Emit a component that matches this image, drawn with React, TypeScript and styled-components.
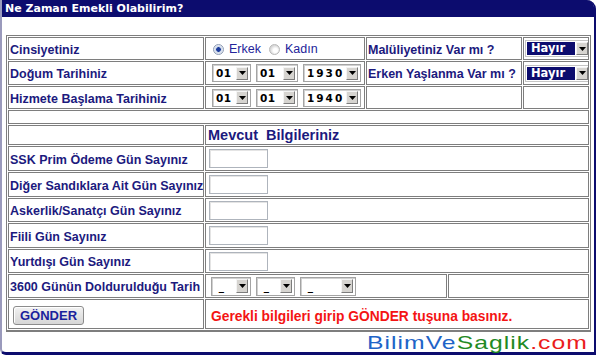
import React from 'react';
import styled, { createGlobalStyle } from 'styled-components';

const GlobalStyle = createGlobalStyle`
  html, body { margin: 0; padding: 0; background: #ffffff; }
  body { font-family: "Liberation Sans", Arial, sans-serif; }
  * { box-sizing: border-box; }
`;

const NAVY = '#0c0c6e';
const LABEL = '#1c1a7e';
const LINE = '#7e7e7e';

const Page = styled.div`
  position: relative;
  width: 598px;
  height: 362px;
  overflow: hidden;
  background: #fff;
`;

const Frame = styled.div`
  width: 596px;
  height: 355px;
  border-left: 2px solid #9a9abc;
  border-right: 2px solid ${NAVY};
  border-bottom: 3px solid ${NAVY};
  border-radius: 0 9px 0 6px;
  display: flex;
  flex-direction: column;
`;

const Header = styled.div`
  height: 17px;
  background: ${NAVY};
  border-top-right-radius: 7px;
  color: #ffffff;
  font-family: "DejaVu Sans", Verdana, sans-serif;
  font-weight: bold;
  font-size: 11px;
  line-height: 17px;
  padding-left: 3px;
  white-space: nowrap;
`;

const Body = styled.div`
  padding: 18px 0 0 4px;
`;

const FormGrid = styled.div`
  display: grid;
  width: max-content;
  grid-template-columns: 196px 160px 81px 74px 66px;
  grid-template-rows: 23px 24px 23px 14px 20px 25px 25px 24px 25px 24px 24px 30px;
  gap: 1px;
  padding: 1px;
  border: 1px solid ${LINE};
  border-bottom-width: 2px;
`;

const Cell = styled.div<{ $col?: string; $pad?: number }>`
  grid-column: ${p => p.$col || 'auto'};
  border: 1px solid ${LINE};
  display: flex;
  align-items: center;
  padding: 0 ${p => (p.$pad ?? 1)}px;
  gap: 5px;
  min-width: 0;
  overflow: hidden;
`;

const Label = styled.span`
  font-weight: bold;
  font-size: 12.5px;
  color: ${LABEL};
  white-space: nowrap;
  padding-top: 2px;
`;

const SectionTitle = styled.span`
  font-weight: bold;
  font-size: 14.5px;
  color: ${LABEL};
  white-space: pre;
  padding-left: 1px;
`;

const RadioGroup = styled.div`
  display: flex;
  align-items: center;
  padding-left: 6px;
  padding-top: 1px;
`;

const Radio = styled.span<{ $checked?: boolean }>`
  display: inline-block;
  width: 11px;
  height: 11px;
  border-radius: 50%;
  border: 1px solid ${p => (p.$checked ? '#8e9cb4' : '#b8b8b8')};
  background: ${p =>
    p.$checked
      ? 'radial-gradient(circle, #1c3c9c 0 2px, #c8d4e8 2.6px, #f0f2f6 5px)'
      : 'radial-gradient(circle at 60% 60%, #ffffff 0 2px, #d8d8d8 5px)'};
  margin-right: 5px;
`;

const RadioText = styled.span`
  font-size: 12.5px;
  color: #24249a;
  margin-right: 8px;
`;

const SelectRow = styled.div<{ $gap?: number; $left?: number }>`
  display: flex;
  align-items: center;
  gap: ${p => p.$gap ?? 4}px;
  padding-left: ${p => p.$left ?? 5}px;
`;

const SelectBox = styled.div<{ $w: number; $h?: number }>`
  width: ${p => p.$w}px;
  height: ${p => p.$h ?? 18}px;
  display: flex;
  align-items: center;
  justify-content: space-between;
  background: #fff;
  border: 1px solid #a4a4a4;
  box-shadow: inset 1px 1px 0 #d0d0d0;
  padding: 1px 2px 1px 3px;
`;

const SelectValue = styled.span<{ $spacing?: number }>`
  font-family: "DejaVu Sans", Verdana, sans-serif;
  font-weight: bold;
  font-size: 10.5px;
  color: #000;
  letter-spacing: ${p => p.$spacing ?? 0}px;
  white-space: pre;
`;

const ArrowBtn = styled.span<{ $h?: number }>`
  width: 12px;
  height: ${p => p.$h ?? 13}px;
  display: flex;
  align-items: center;
  justify-content: center;
  background: #d6d4d0;
  border: 1px solid;
  border-color: #f4f4f4 #7c7c7c #7c7c7c #f4f4f4;
  flex-shrink: 0;
`;

const Arrow = () => (
  <svg width="7" height="4" viewBox="0 0 7 4">
    <path d="M0 0 H7 L3.5 4 Z" fill="#000" />
  </svg>
);

const HayirBox = styled.div`
  display: flex;
  align-items: center;
  height: 17px;
  padding: 1px;
  background: #fff;
  border: 1px solid #c4c4c4;
`;

const HayirValue = styled.span`
  width: 48px;
  height: 13px;
  background: ${NAVY};
  color: #fff;
  font-family: "DejaVu Sans", Verdana, sans-serif;
  font-weight: bold;
  font-size: 11.5px;
  line-height: 13px;
  padding-left: 4px;
  margin-right: 1px;
`;

const TextInput = styled.input`
  width: 59px;
  height: 19px;
  margin-left: 2px;
  border: 1px solid #aeb4bc;
  box-shadow: inset 1px 1px 0 #e4e4e4;
  background: #fff;
  padding: 0 2px;
  font-size: 12px;
  outline: none;
`;

const SubmitButton = styled.button`
  width: 71px;
  height: 19px;
  margin-left: 3px;
  margin-top: 2px;
  border: 1px solid #8c8c8c;
  border-radius: 3px;
  background: linear-gradient(#f2f2f2, #d6d6d6);
  box-shadow: inset 1px 1px 0 #ffffff;
  color: #1a229c;
  font-family: "Liberation Sans", Arial, sans-serif;
  font-weight: bold;
  font-size: 13px;
  padding: 0;
  line-height: 17px;
`;

const Notice = styled.span`
  color: #f41414;
  font-weight: bold;
  font-size: 13.8px;
  white-space: nowrap;
  padding-left: 4px;
  padding-top: 4px;
`;

const Watermark = styled.div`
  position: absolute;
  left: 367px;
  top: 332px;
  font-family: "Liberation Sans", Arial, sans-serif;
  font-size: 19px;
  line-height: 22px;
  letter-spacing: 0.8px;
  white-space: nowrap;
  transform: scaleX(1.3);
  transform-origin: left center;
`;

const Part = styled.span<{ $color: string }>`
  color: ${p => p.$color};
`;

type SelProps = { value: string; w: number; spacing?: number; h?: number };
const Select = ({ value, w, spacing, h }: SelProps) => (
  <SelectBox $w={w} $h={h}>
    <SelectValue $spacing={spacing}>{value}</SelectValue>
    <ArrowBtn $h={h ? h - 5 : 13}>
      <Arrow />
    </ArrowBtn>
  </SelectBox>
);

const Hayir = () => (
  <HayirBox>
    <HayirValue>Hayır</HayirValue>
    <ArrowBtn $h={13}>
      <Arrow />
    </ArrowBtn>
  </HayirBox>
);

const DateSelects = ({ year }: { year: string }) => (
  <SelectRow $gap={5} $left={5}>
    <Select value="01" w={39} spacing={0.5} />
    <Select value="01" w={42} spacing={0.5} />
    <Select value={year} w={58} spacing={2} />
  </SelectRow>
);

const numberRows = [
  'SSK Prim Ödeme Gün Sayınız',
  'Diğer Sandıklara Ait Gün Sayınız',
  'Askerlik/Sanatçı Gün Sayınız',
  'Fiili Gün Sayınız',
  'Yurtdışı Gün Sayınız',
];

export default function App() {
  return (
    <Page>
      <GlobalStyle />
      <Frame>
        <Header>Ne Zaman Emekli Olabilirim?</Header>
        <Body>
          <FormGrid>
            <Cell>
              <Label>Cinsiyetiniz</Label>
            </Cell>
            <Cell>
              <RadioGroup>
                <Radio $checked />
                <RadioText>Erkek</RadioText>
                <Radio />
                <RadioText>Kadın</RadioText>
              </RadioGroup>
            </Cell>
            <Cell $col="3 / 5">
              <Label>Malüliyetiniz Var mı ?</Label>
            </Cell>
            <Cell>
              <Hayir />
            </Cell>

            <Cell>
              <Label>Doğum Tarihiniz</Label>
            </Cell>
            <Cell>
              <DateSelects year="1930" />
            </Cell>
            <Cell $col="3 / 5">
              <Label>Erken Yaşlanma Var mı ?</Label>
            </Cell>
            <Cell>
              <Hayir />
            </Cell>

            <Cell>
              <Label>Hizmete Başlama Tarihiniz</Label>
            </Cell>
            <Cell>
              <DateSelects year="1940" />
            </Cell>
            <Cell $col="3 / 5" />
            <Cell />

            <Cell $col="1 / 6" />

            <Cell />
            <Cell $col="2 / 6">
              <SectionTitle>{'Mevcut  Bilgileriniz'}</SectionTitle>
            </Cell>

            {numberRows.map(label => (
              <React.Fragment key={label}>
                <Cell>
                  <Label>{label}</Label>
                </Cell>
                <Cell $col="2 / 6">
                  <TextInput type="text" defaultValue="" />
                </Cell>
              </React.Fragment>
            ))}

            <Cell>
              <Label>3600 Günün Doldurulduğu Tarih</Label>
            </Cell>
            <Cell $col="2 / 4">
              <SelectRow $gap={5} $left={4}>
                <Select value=" _" w={40} h={19} />
                <Select value=" _" w={39} h={19} />
                <Select value=" _" w={56} h={19} />
              </SelectRow>
            </Cell>
            <Cell $col="4 / 6" />

            <Cell>
              <SubmitButton type="button">GÖNDER</SubmitButton>
            </Cell>
            <Cell $col="2 / 6">
              <Notice>Gerekli bilgileri girip GÖNDER tuşuna basınız.</Notice>
            </Cell>
          </FormGrid>
        </Body>
      </Frame>
      <Watermark>
        <Part $color="#1e64c8">BilimVe</Part>
        <Part $color="#1f8a24">Saglik</Part>
        <Part $color="#ea1c1c">.com</Part>
      </Watermark>
    </Page>
  );
}
